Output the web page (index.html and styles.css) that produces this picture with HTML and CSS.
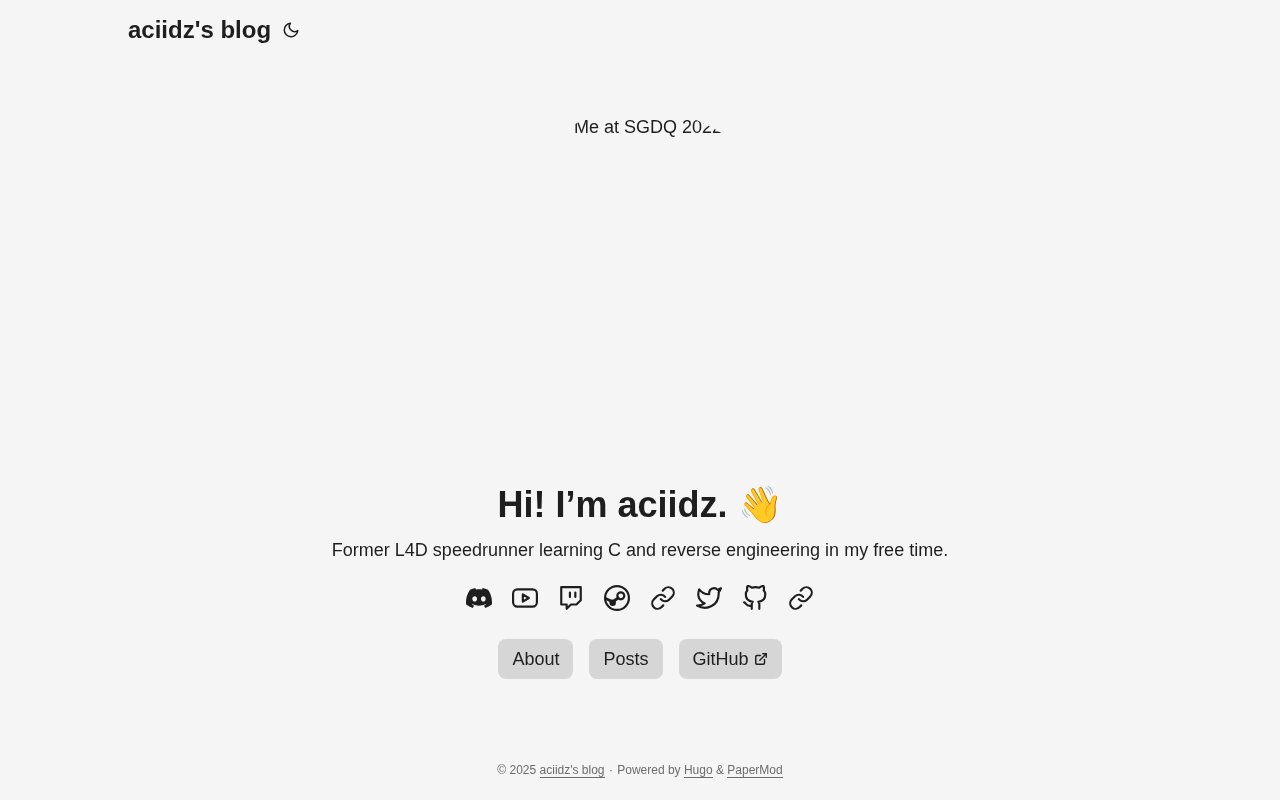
FILE: index.html
```html
<!DOCTYPE html>
<html lang="en">
<head>
  <meta charset="UTF-8">
  <meta name="viewport" content="width=device-width, initial-scale=1">
  <title>aciidz's blog</title>
  <link rel="stylesheet" href="styles.css">
</head>
<body>
  <!-- Header -->
  <header class="header">
    <nav class="nav">
      <a class="logo" href="#">aciidz's blog</a>
      <button class="theme-toggle" aria-label="Toggle theme">
        <svg xmlns="http://www.w3.org/2000/svg" width="24" height="18" viewBox="0 0 24 24" fill="none" stroke="currentColor" stroke-width="2" stroke-linecap="round" stroke-linejoin="round"><path d="M21 12.79A9 9 0 1 1 11.21 3 7 7 0 0 0 21 12.79z"/></svg>
      </button>
    </nav>
  </header>

  <!-- Profile -->
  <main class="main">
    <div class="profile">
      <div class="avatar"><span class="avatar-alt">Me at SGDQ 2022</span></div>
      <h1 class="title">Hi! I’m aciidz. 👋</h1>
      <p class="subtitle">Former L4D speedrunner learning C and reverse engineering in my free time.</p>

      <div class="social-icons">
        <a href="#" title="Discord"><svg viewBox="0 0 24 24" fill="currentColor"><path d="M20.317 4.3698a19.7913 19.7913 0 00-4.8851-1.5152.0741.0741 0 00-.0785.0371c-.211.3753-.4447.8648-.6083 1.2495-1.8447-.2762-3.68-.2762-5.4868 0-.1636-.3933-.4058-.8742-.6177-1.2495a.077.077 0 00-.0785-.037 19.7363 19.7363 0 00-4.8852 1.515.0699.0699 0 00-.0321.0277C.5334 9.0458-.319 13.5799.0992 18.0578a.0824.0824 0 00.0312.0561c2.0528 1.5076 4.0413 2.4228 5.9929 3.0294a.0777.0777 0 00.0842-.0276c.4616-.6304.8731-1.2952 1.226-1.9942a.076.076 0 00-.0416-.1057c-.6528-.2476-1.2743-.5495-1.8722-.8923a.077.077 0 01-.0076-.1277c.1258-.0943.2517-.1923.3718-.2914a.0743.0743 0 01.0776-.0105c3.9278 1.7933 8.18 1.7933 12.0614 0a.0739.0739 0 01.0785.0095c.1202.099.246.1981.3728.2924a.077.077 0 01-.0066.1276 12.2986 12.2986 0 01-1.873.8914.0766.0766 0 00-.0407.1067c.3604.698.7719 1.3628 1.225 1.9932a.076.076 0 00.0842.0286c1.961-.6067 3.9495-1.5219 6.0023-3.0294a.077.077 0 00.0313-.0552c.5004-5.177-.8382-9.6739-3.5485-13.6604a.061.061 0 00-.0312-.0286zM8.02 15.3312c-1.1825 0-2.1569-1.0857-2.1569-2.419 0-1.3332.9555-2.4189 2.157-2.4189 1.2108 0 2.1757 1.0952 2.1568 2.419 0 1.3332-.9555 2.4189-2.1569 2.4189zm7.9748 0c-1.1825 0-2.1569-1.0857-2.1569-2.419 0-1.3332.9554-2.4189 2.1569-2.4189 1.2108 0 2.1757 1.0952 2.1568 2.419 0 1.3332-.946 2.4189-2.1568 2.4189Z"/></svg></a>
        <a href="#" title="YouTube"><svg viewBox="0 0 24 24" fill="none" stroke="currentColor" stroke-width="2" stroke-linecap="round" stroke-linejoin="round"><rect x="1" y="4" width="22" height="16" rx="4"/><polygon points="10 8.6 15.5 12 10 15.4"/></svg></a>
        <a href="#" title="Twitch"><svg viewBox="0 0 24 24" fill="none" stroke="currentColor" stroke-width="2" stroke-linecap="round" stroke-linejoin="round"><path d="M21 2H3v16h5v4l4-4h5l4-4V2zm-10 9V7m5 4V7"/></svg></a>
        <a href="#" title="Steam"><svg viewBox="0 0 24 24" fill="none" stroke="currentColor" stroke-width="2" stroke-linecap="round" stroke-linejoin="round"><circle cx="12" cy="12" r="11"/><circle cx="15.5" cy="10" r="3.2"/><circle cx="8" cy="16.3" r="2" fill="currentColor"/><path d="M1.5 12.5l6.5 3 5-3.5" stroke-width="2.6"/></svg></a>
        <a href="#" title="Link"><svg viewBox="0 0 24 24" fill="none" stroke="currentColor" stroke-width="2" stroke-linecap="round" stroke-linejoin="round"><path d="M10 13a5 5 0 0 0 7.54.54l3-3a5 5 0 0 0-7.07-7.07l-1.72 1.71"/><path d="M14 11a5 5 0 0 0-7.54-.54l-3 3a5 5 0 0 0 7.07 7.07l1.71-1.71"/></svg></a>
        <a href="#" title="Twitter"><svg viewBox="0 0 24 24" fill="none" stroke="currentColor" stroke-width="2" stroke-linecap="round" stroke-linejoin="round"><path d="M23 3a10.9 10.9 0 0 1-3 1.53 4.48 4.48 0 0 0-7.86 3v1A10.66 10.66 0 0 1 3 4s-4 9 5 13a11.64 11.64 0 0 1-7 2c9 5 20 0 20-11.5a4.5 4.5 0 0 0-.08-.83A7.72 7.72 0 0 0 23 3z"/></svg></a>
        <a href="#" title="GitHub"><svg viewBox="0 0 24 24" fill="none" stroke="currentColor" stroke-width="2" stroke-linecap="round" stroke-linejoin="round"><path d="M9 19c-5 1.5-5-2.5-7-3m14 6v-3.87a3.37 3.37 0 0 0-.94-2.61c3.14-.35 6.44-1.54 6.44-7A5.44 5.44 0 0 0 20 4.77 5.07 5.07 0 0 0 19.91 1S18.73.65 16 2.48a13.38 13.38 0 0 0-7 0C6.27.65 5.09 1 5.09 1A5.07 5.07 0 0 0 5 4.77a5.44 5.44 0 0 0-1.5 3.75c0 5.42 3.3 6.61 6.44 7A3.37 3.37 0 0 0 9 18.13V22"/></svg></a>
        <a href="#" title="Link"><svg viewBox="0 0 24 24" fill="none" stroke="currentColor" stroke-width="2" stroke-linecap="round" stroke-linejoin="round"><path d="M10 13a5 5 0 0 0 7.54.54l3-3a5 5 0 0 0-7.07-7.07l-1.72 1.71"/><path d="M14 11a5 5 0 0 0-7.54-.54l-3 3a5 5 0 0 0 7.07 7.07l1.71-1.71"/></svg></a>
      </div>

      <div class="buttons">
        <a class="button" href="#">About</a>
        <a class="button" href="#">Posts</a>
        <a class="button" href="#">GitHub
          <svg class="external" viewBox="0 0 24 24" fill="none" stroke="currentColor" stroke-width="2.5" stroke-linecap="round" stroke-linejoin="round"><path d="M18 13v6a2 2 0 0 1-2 2H5a2 2 0 0 1-2-2V8a2 2 0 0 1 2-2h6"/><path d="M15 3h6v6"/><path d="M10 14L21 3"/></svg>
        </a>
      </div>
    </div>
  </main>

  <!-- Footer -->
  <footer class="footer">
    <span>© 2025 <a href="#">aciidz's blog</a></span>
    <span class="sep">·</span>
    <span>Powered by <a href="#">Hugo</a> &amp; <a href="#">PaperMod</a></span>
  </footer>
</body>
</html>
```

FILE: styles.css
```css
body {
  background-color: #f5f5f5;
  color: #1e1e1e;
  font-family: "Liberation Sans", Arial, sans-serif;
  font-size: 18px;
  line-height: 1.6;
  margin: 0;
  height: 800px;
  overflow: hidden;
  will-change: transform; /* keeps text on grayscale antialiasing */
}
a {
  color: inherit;
  text-decoration: none;
}
/* Header */
.header {
  height: 60px;
}
.nav {
  display: flex;
  align-items: center;
  max-width: 1024px;
  height: 60px;
  margin: 0 auto;
}
.logo {
  font-size: 24px;
  font-weight: 700;
  line-height: 60px;
}
.theme-toggle {
  display: flex;
  background: none;
  border: none;
  color: inherit;
  padding: 0;
  margin-left: 8px;
}
/* Profile */
.main {
  height: 680px;
}
.profile {
  display: flex;
  flex-direction: column;
  align-items: center;
  padding-top: 49px;
  text-align: center;
}
.avatar {
  box-sizing: border-box;
  width: 300px;
  height: 300px;
  padding-left: 16px;
  border-radius: 50%;
  overflow: hidden;
  line-height: 36px;
}
.avatar-alt {
  display: block;
}
.title {
  font-size: 36px;
  font-weight: 700;
  line-height: 1.2;
  margin: 74px 0 0;
}
.subtitle {
  margin: 10px 0 0;
  line-height: 1.6;
}
.social-icons {
  display: flex;
  justify-content: center;
  padding: 10px 0;
}
.social-icons a {
  display: flex;
  padding: 10px;
}
.social-icons svg {
  width: 26px;
  height: 26px;
}
.buttons {
  display: flex;
  justify-content: center;
  gap: 16px;
  margin-top: 8px;
}
.button {
  display: flex;
  align-items: center;
  gap: 5px;
  height: 40px;
  padding: 0 14px;
  background-color: #d6d6d6;
  border-radius: 8px;
}
.external {
  width: 14px;
  height: 14px;
}
/* Footer */
.footer {
  height: 60px;
  padding-top: 21px;
  box-sizing: border-box;
  text-align: center;
  font-size: 12px;
  line-height: 19px;
  color: #6c6c6c;
}
.footer span {
  margin: 0 1px;
}
.footer .sep {
  margin: 0;
}
.footer a {
  border-bottom: 1px solid #6c6c6c;
}
```
